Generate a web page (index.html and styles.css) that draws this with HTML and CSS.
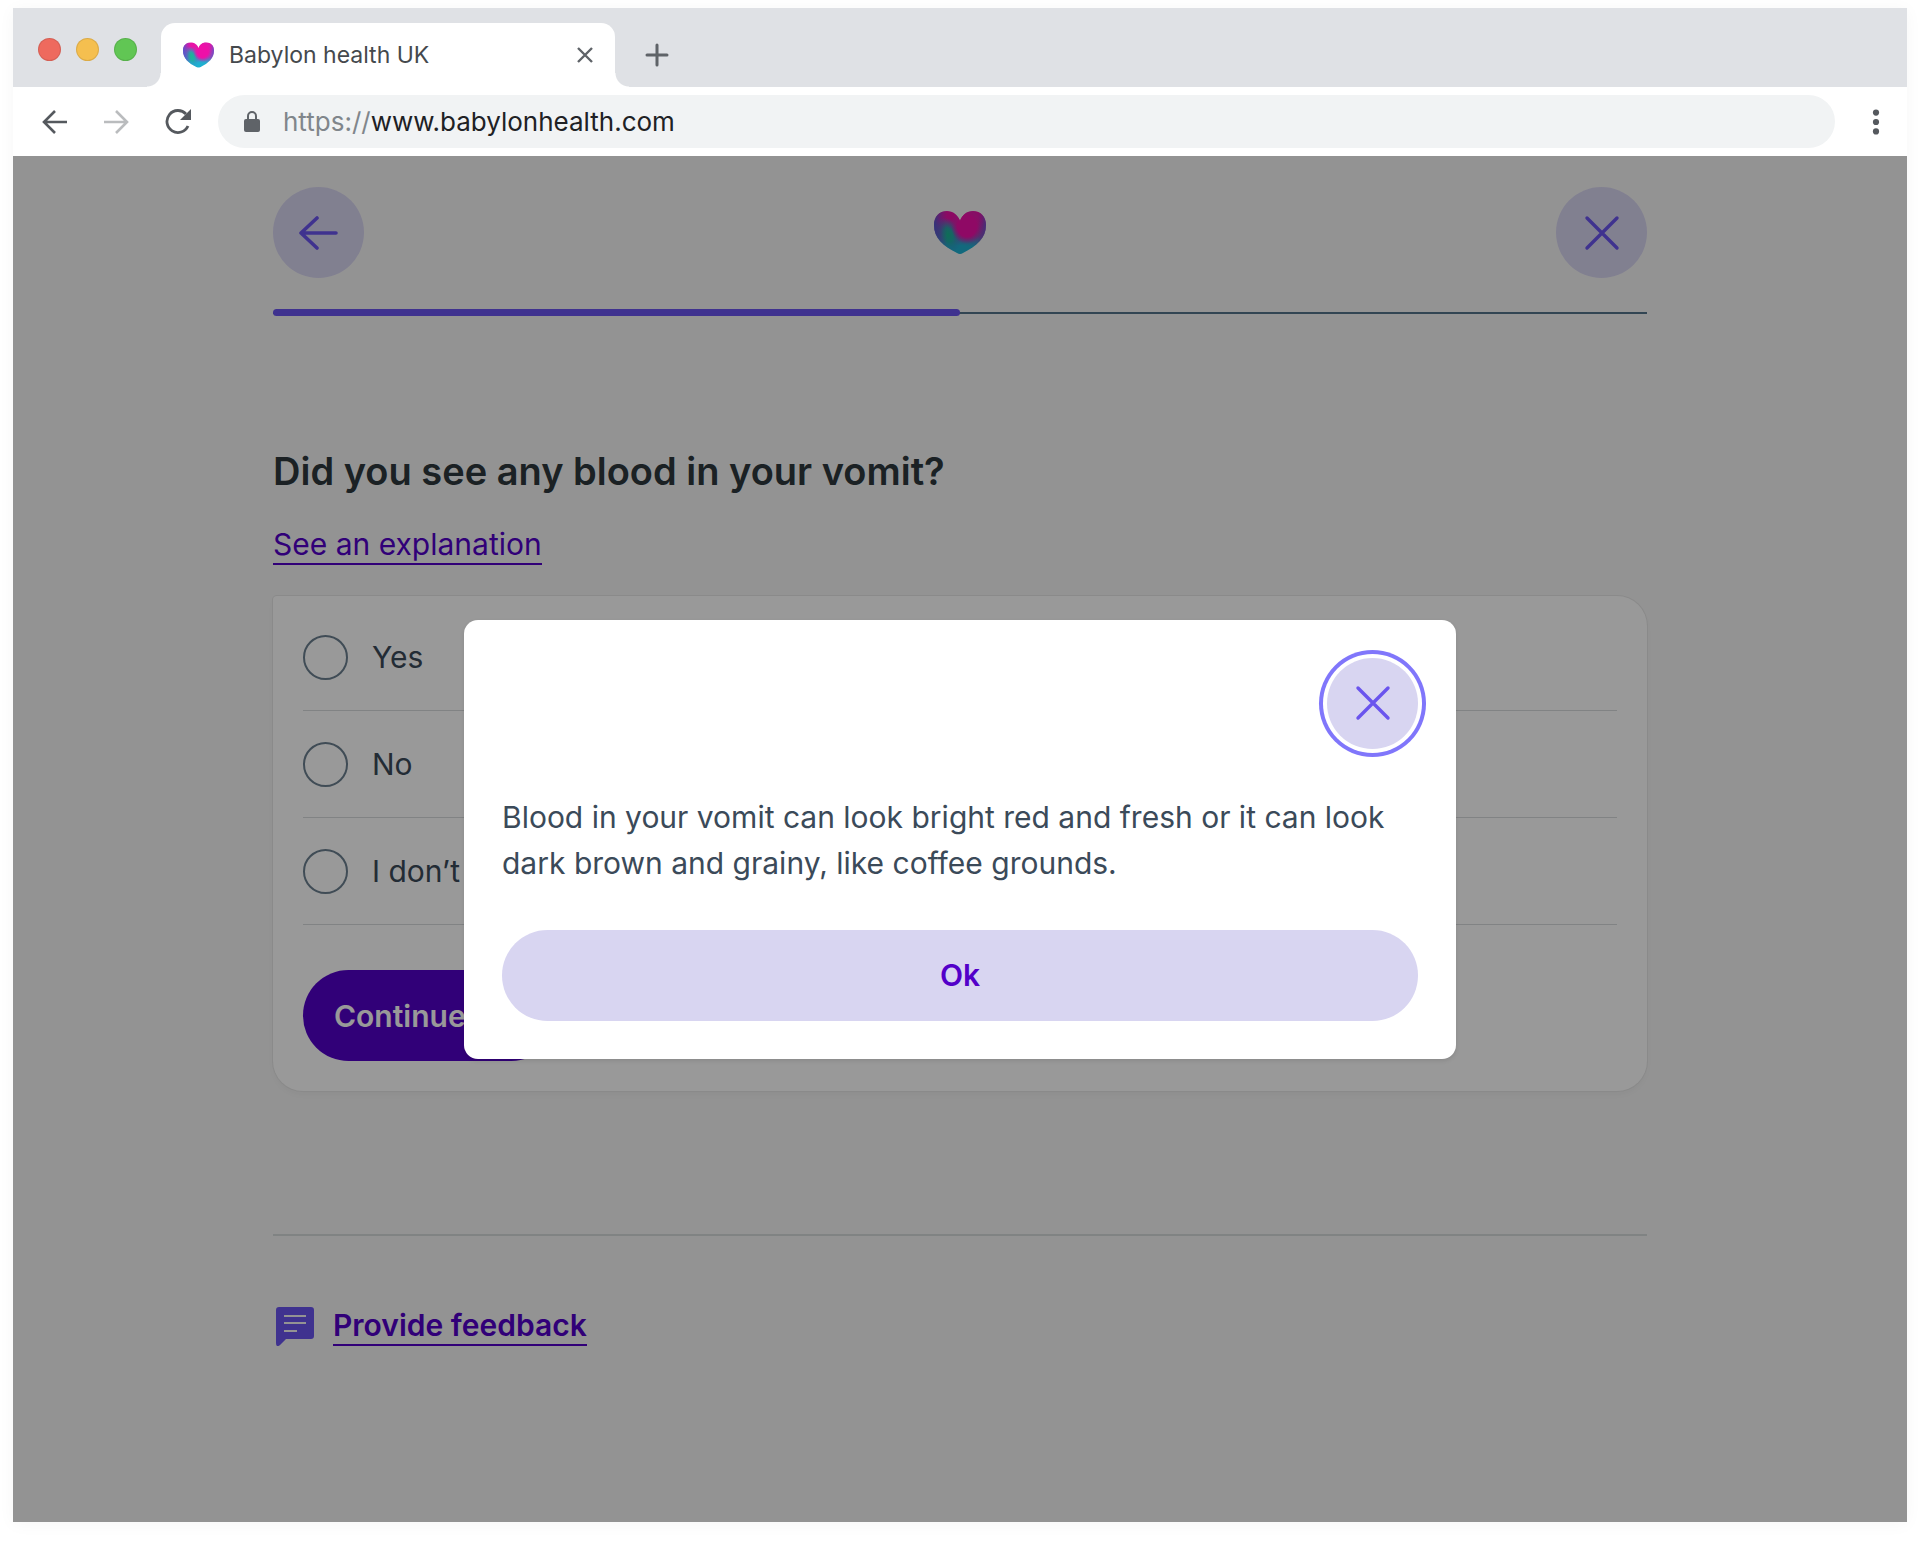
FILE: index.html
```html
<!DOCTYPE html>
<html lang="en">
<head>
    <meta charset="utf-8">
    <title>Babylon health UK</title>
    <link rel="stylesheet" href="styles.css">
</head>
<body>

<!-- shared shapes -->
<svg class="defs" width="0" height="0" aria-hidden="true">
    <defs>
        <clipPath id="heartClip">
            <path d="M26 10C24 4 19 0 13 0C5 0 0 6 0 14C0 27 9 35 23 42Q26 44 29 42C43 35 52 27 52 14C52 6 47 0 39 0C33 0 28 4 26 10Z"/>
        </clipPath>
        <linearGradient id="heartBase" x1="0.55" y1="0" x2="0.45" y2="1">
            <stop offset="0.2" stop-color="#e812a6"/>
            <stop offset="0.55" stop-color="#8a50b8"/>
            <stop offset="0.8" stop-color="#1eb0d0"/>
        </linearGradient>
        <radialGradient id="heartTeal">
            <stop offset="0" stop-color="#18b890"/>
            <stop offset="0.4" stop-color="#1cb0a4" stop-opacity="0.9"/>
            <stop offset="1" stop-color="#4080d0" stop-opacity="0"/>
        </radialGradient>
        <radialGradient id="heartPink">
            <stop offset="0.6" stop-color="#ee10a8"/>
            <stop offset="1" stop-color="#c030b0" stop-opacity="0"/>
        </radialGradient>
        <linearGradient id="heartEdge">
            <stop offset="0" stop-color="#4060d0" stop-opacity="0.9"/>
            <stop offset="0.25" stop-color="#8040c0" stop-opacity="0"/>
            <stop offset="0.85" stop-color="#8040c0" stop-opacity="0"/>
            <stop offset="1" stop-color="#5060d0" stop-opacity="0.8"/>
        </linearGradient>
        <symbol id="heart" viewBox="0 0 52 43">
            <g clip-path="url(#heartClip)">
                <rect width="52" height="43" fill="url(#heartBase)"/>
                <ellipse cx="14" cy="24" rx="12" ry="18" fill="url(#heartTeal)" transform="rotate(-20 14 24)"/>
                <ellipse cx="33" cy="15" rx="16" ry="18" fill="url(#heartPink)"/>
                <rect width="52" height="43" fill="url(#heartEdge)"/>
            </g>
        </symbol>
        <symbol id="cross" viewBox="0 0 40 40">
            <path d="M5 5L35 35M35 5L5 35" fill="none" stroke="currentColor" stroke-width="3.4" stroke-linecap="round"/>
        </symbol>
    </defs>
</svg>

<div class="window">
    <div class="tabbar">
        <div class="lights">
            <span class="light red"></span>
            <span class="light yellow"></span>
            <span class="light green"></span>
        </div>
        <div class="tab">
            <svg class="favicon" width="31" height="26"><use href="#heart"/></svg>
            <span class="tab-title">Babylon health UK</span>
            <button class="icon-btn" type="button" aria-label="Close tab">
                <svg width="18" height="18" viewBox="0 0 18 18"><path d="M2 2L16 16M16 2L2 16" fill="none" stroke="#5f6368" stroke-width="2.4"/></svg>
            </button>
        </div>
        <button class="icon-btn new-tab" type="button" aria-label="New tab">
            <svg width="24" height="24" viewBox="0 0 24 24"><path d="M12 2V22M2 12H22" fill="none" stroke="#5f6368" stroke-width="3" stroke-linecap="round"/></svg>
        </button>
    </div>

    <div class="toolbar">
        <button class="icon-btn" type="button" aria-label="Back">
            <svg width="26" height="24" viewBox="0 0 26 24"><path d="M25 12H2M13 1L2 12L13 23" fill="none" stroke="#55595e" stroke-width="2.6"/></svg>
        </button>
        <button class="icon-btn" type="button" aria-label="Forward">
            <svg width="26" height="24" viewBox="0 0 26 24"><path d="M1 12H24M13 1L24 12L13 23" fill="none" stroke="#babcbe" stroke-width="2.6"/></svg>
        </button>
        <button class="icon-btn" type="button" aria-label="Reload">
            <svg width="28" height="26" viewBox="0 0 28 26"><path d="M24 17A11 11 0 1 1 22 5" fill="none" stroke="#55595e" stroke-width="2.8"/><path d="M27 0V11H16Z" fill="#55595e"/></svg>
        </button>
        <div class="address">
            <svg width="16" height="22" viewBox="0 0 16 22"><rect y="8" width="16" height="13" rx="2" fill="#5f6368"/><path d="M4 9V5A4 4 0 0 1 12 5V9" fill="none" stroke="#5f6368" stroke-width="2"/></svg>
            <span class="url"><span class="scheme">https://</span>www.babylonhealth.com</span>
        </div>
        <button class="icon-btn menu" type="button" aria-label="Menu">
            <svg width="8" height="26" viewBox="0 0 8 26"><g fill="#55595e"><circle cx="4" cy="3.6" r="3.1"/><circle cx="4" cy="13" r="3.1"/><circle cx="4" cy="22.4" r="3.1"/></g></svg>
        </button>
    </div>

    <div class="page">
        <div class="content">
            <div class="nav">
                <button class="round-btn" type="button" aria-label="Go back">
                    <svg width="40" height="40" viewBox="0 0 40 40"><path d="M37 20H2M18 5L2 20L18 35" fill="none" stroke="currentColor" stroke-width="3.6" stroke-linecap="round" stroke-linejoin="round"/></svg>
                </button>
                <svg class="logo" width="52" height="43" role="img" aria-label="Babylon"><use href="#heart"/></svg>
                <button class="round-btn" type="button" aria-label="Close">
                    <svg width="40" height="40"><use href="#cross"/></svg>
                </button>
            </div>
            <div class="progress"><div class="progress-bar" style="width: 50%"></div></div>

            <h1>Did you see any blood in your vomit?</h1>
            <div class="explain"><a class="link" href="#">See an explanation</a></div>

            <form class="card">
                <label class="option"><input type="radio" name="blood"> Yes</label>
                <label class="option"><input type="radio" name="blood"> No</label>
                <label class="option"><input type="radio" name="blood"> I don’t</label>
                <button class="continue" type="button">Continue</button>
            </form>

            <div class="footer">
                <svg width="38" height="39" viewBox="0 0 38 39">
                    <path d="M3 0H35Q38 0 38 3V29Q38 32 35 32H10L4 38Q0 41 0 36V3Q0 0 3 0Z" fill="#6a54ee"/>
                    <path d="M8 9H30M8 16H30M8 24H21" stroke="#f6f6f6" stroke-width="2"/>
                </svg>
                <a class="link strong" href="#">Provide feedback</a>
            </div>
        </div>

        <div class="overlay">
            <div class="modal" role="dialog" aria-modal="true" aria-describedby="explanation">
                <button class="round-btn focused" type="button" aria-label="Close">
                    <svg width="40" height="40"><use href="#cross"/></svg>
                </button>
                <p id="explanation">Blood in your vomit can look bright red and fresh or it can look dark brown and grainy, like coffee grounds.</p>
                <button class="ok" type="button">Ok</button>
            </div>
        </div>
    </div>
</div>

</body>
</html>
```
FILE: styles.css
```css
* {
    box-sizing: border-box;
}

body {
    margin: 0;
    background: #fff;
    font-family: Inter, "Liberation Sans", sans-serif;
    font-size: 30px;
    line-height: 46px;
    color: #3b4a59;
}

button {
    border: 0;
    padding: 0;
    font: inherit;
    cursor: pointer;
}

svg {
    display: block;
    flex: none;
}

.defs {
    position: absolute;
}

.window {
    display: flex;
    flex-direction: column;
    min-height: calc(100vh - 27px);
    margin: 8px 13px 19px;
    box-shadow: 0 2px 16px rgba(0, 0, 0, 0.04);
}

/* browser chrome */
.tabbar {
    display: flex;
    align-items: flex-end;
    height: 79px;
    background: #dfe1e5;
}

.lights {
    display: flex;
    gap: 15px;
    width: 148px;
    padding: 3px 0 0 25px;
    align-self: center;
}

.light {
    width: 23px;
    height: 23px;
    border-radius: 50%;
    border: 1px solid rgba(0, 0, 0, 0.1);
}

.red { background: #ee6a5e; }
.yellow { background: #f5bf4f; }
.green { background: #61c654; }

.tab {
    position: relative;
    display: flex;
    align-items: center;
    width: 454px;
    height: 64px;
    padding: 0 21px 0 22px;
    border-radius: 14px 14px 0 0;
    background: #fff;
}

/* curved feet of the tab */
.tab::before, .tab::after {
    content: "";
    position: absolute;
    bottom: 0;
    width: 14px;
    height: 14px;
}

.tab::before {
    left: -14px;
    background: radial-gradient(circle at 0 0, #dfe1e5 13px, #fff 14px);
}

.tab::after {
    right: -14px;
    background: radial-gradient(circle at 100% 0, #dfe1e5 13px, #fff 14px);
}

.tab-title {
    flex: 1;
    margin-left: 15px;
    font-size: 23px;
    color: #45494d;
}

.icon-btn {
    display: flex;
    background: none;
}

.new-tab {
    height: 64px;
    align-items: center;
    margin-left: 30px;
}

.toolbar {
    display: flex;
    align-items: center;
    gap: 35px;
    height: 69px;
    padding: 0 27px 0 29px;
    background: #fff;
}

.address {
    display: flex;
    flex: 1;
    align-items: center;
    gap: 23px;
    height: 53px;
    margin: 0 2px 0 -9px;
    padding-left: 26px;
    border-radius: 27px;
    background: #f1f3f4;
}

.url {
    font-size: 26px;
    color: #202124;
}

.scheme {
    color: #80868b;
}

/* page */
.page {
    position: relative;
    flex: 1;
    background: #f6f6f6;
}

.content {
    max-width: 1374px;
    margin: 0 auto;
    padding: 31px 0;
}

.nav {
    display: flex;
    align-items: center;
    justify-content: space-between;
}

.round-btn {
    display: flex;
    align-items: center;
    justify-content: center;
    width: 91px;
    height: 91px;
    border-radius: 50%;
    background: #d8d5f1;
    color: #6a54ee;
}

.progress {
    display: flex;
    align-items: center;
    height: 7px;
    margin-top: 31px;
    background: linear-gradient(#54738a, #54738a) center / 100% 2px no-repeat;
}

.progress-bar {
    height: 7px;
    border-radius: 4px;
    background: #6a54ee;
}

h1 {
    margin: 132px 0 27px;
    font-size: 38px;
    font-weight: 600;
    line-height: 46px;
    color: #2d373c;
}

.explain {
    height: 46px;
}

.link {
    display: inline-block;
    line-height: 38px;
    border-bottom: 2px solid #5300c9;
    color: #5300c9;
    text-decoration: none;
}

.strong {
    font-weight: 600;
}

.card {
    margin-top: 29px;
    padding: 8px 30px 30px;
    border-radius: 4px 30px 30px 30px;
    background: #fff;
    box-shadow: 0 0 0 1px #e6e6e6, 0 4px 8px rgba(0, 0, 0, 0.04);
}

.option {
    display: flex;
    align-items: center;
    gap: 24px;
    height: 107px;
    border-bottom: 1px solid #d8dadc;
}

.option input {
    appearance: none;
    width: 45px;
    height: 45px;
    margin: 0;
    border: 2px solid #6b7f8f;
    border-radius: 50%;
}

.option input:checked {
    border-width: 12px;
    border-color: #5300c9;
}

.continue {
    width: 254px;
    height: 91px;
    margin-top: 45px;
    padding-left: 31px;
    border-radius: 46px;
    background: #5300c9;
    color: #fff;
    font-weight: 600;
    text-align: left;
}

.footer {
    display: flex;
    align-items: center;
    gap: 19px;
    margin-top: 143px;
    padding: 70px 3px;
    border-top: 2px solid #d6dadb;
}

/* explanation dialog */
.overlay {
    position: absolute;
    inset: 0;
    display: flex;
    align-items: center;
    justify-content: center;
    background: rgba(0, 0, 0, 0.4);
}

.modal {
    display: flex;
    flex-direction: column;
    width: 992px;
    max-width: 100%;
    padding: 38px;
    border-radius: 14px;
    background: #fff;
    box-shadow: 0 2px 4px rgba(0, 0, 0, 0.1);
}

.modal p {
    margin: 45px 0 44px;
}

.focused {
    align-self: flex-end;
    box-shadow: 0 0 0 4px #fff, 0 0 0 8px #8076fb;
}

.ok {
    height: 91px;
    border-radius: 46px;
    background: #d8d5f1;
    color: #5300c9;
    font-weight: 600;
}
```
